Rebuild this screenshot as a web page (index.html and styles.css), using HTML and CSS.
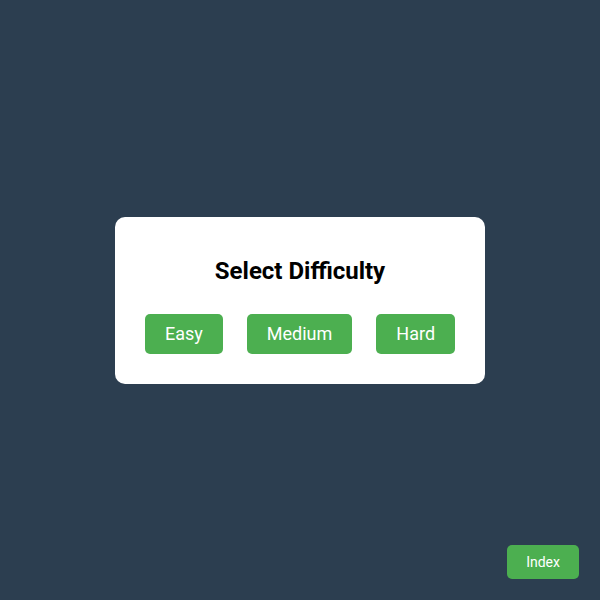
FILE: index.html
```html
<!DOCTYPE html>
<html lang="en">
<head>
<meta charset="utf-8">
<title>Select Difficulty</title>
<link rel="stylesheet" href="styles.css">
</head>
<body>
  <main class="screen">
    <section class="card">
      <h2 class="title">Select Difficulty</h2>
      <div class="options">
        <button class="btn">Easy</button>
        <button class="btn">Medium</button>
        <button class="btn">Hard</button>
      </div>
    </section>
  </main>
  <button class="index-btn">Index</button>
</body>
</html>
```

FILE: styles.css
```css
html, body {
  margin: 0;
  padding: 0;
}

body {
  background: #2c3e50;
  font-family: Roboto, "Liberation Sans", Arial, sans-serif;
}

.screen {
  height: 100vh;
  display: flex;
  align-items: center;
  justify-content: center;
}

.card {
  background: #ffffff;
  border-radius: 10px;
  padding: 20px 30px 30px;
  width: 310px;
  text-align: center;
}

.title {
  margin: 20px 0 29px;
  font-size: 24px;
  line-height: 28px;
  font-weight: 700;
  color: #000;
}

.options {
  display: flex;
  justify-content: center;
  gap: 24px;
}

.btn {
  background: #4caf50;
  color: #fff;
  border: none;
  border-radius: 5px;
  padding: 10px 20px;
  font-family: inherit;
  font-size: 18px;
  line-height: 20px;
  cursor: pointer;
}

.index-btn {
  position: fixed;
  right: 21px;
  bottom: 21px;
  background: #4caf50;
  color: #fff;
  border: none;
  border-radius: 5px;
  padding: 9px 19px;
  font-family: inherit;
  font-size: 14px;
  line-height: 16px;
  cursor: pointer;
}
```
